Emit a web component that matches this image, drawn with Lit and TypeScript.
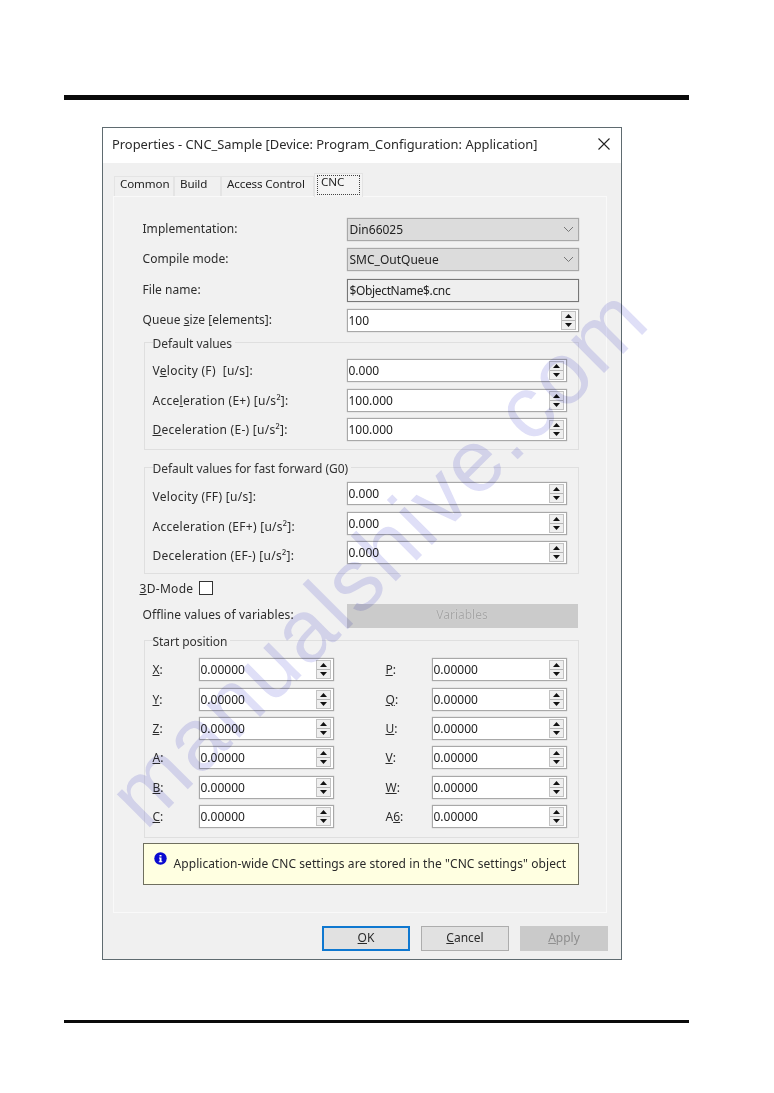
import { LitElement, html, css } from "lit";
import { customElement } from "lit/decorators.js";

const mn = (s: string) => {
  const i = s.indexOf("&");
  if (i < 0) return s;
  return html`${s.slice(0, i)}<u>${s[i + 1]}</u>${s.slice(i + 2)}`;
};

const spin = html`<span class="spin">
  <span class="sb"><svg width="7" height="4" viewBox="0 0 7 4"><path d="M3.5 0 7 4H0z" fill="#111"/></svg></span>
  <span class="sb"><svg width="7" height="4" viewBox="0 0 7 4"><path d="M0 0h7L3.5 4z" fill="#111"/></svg></span>
</span>`;

const chevron = html`<svg class="chev" width="11" height="7" viewBox="0 0 11 7"><path d="M1 1l4.5 4.5L10 1" fill="none" stroke="#777" stroke-width="1"/></svg>`;

const TABS: [string, number][] = [["Common", 60], ["Build", 47], ["Access Control", 93]];

@customElement("app-root")
export class AppRoot extends LitElement {
  static styles = css`
    :host { display: block; height: 1093px; position: relative; overflow: hidden; background: #fff;
      font-family: "Noto Sans", "Open Sans", sans-serif; font-size: 12px; color: #222; }
    .rule { background: #0a0a0a; margin-left: 64px; width: 625px; }
    .rule.top { height: 5px; margin-top: 95px; }
    .rule.bot { height: 3px; margin-top: 60px; }
    .dialog { margin: 27px 0 0 102px; width: 520px; height: 833px; box-sizing: border-box;
      border: 1px solid #5f6b70; background: #f0f0f0; display: flex; flex-direction: column; filter: blur(0.35px); }
    .title { height: 35px; box-sizing: border-box; background: #fff; flex: none; display: flex; align-items: center;
      justify-content: space-between; padding: 0 11px 3px 9px; font-size: 12.9px; color: #2a2a2a; }
    .tabs { display: flex; align-items: flex-end; height: 33px; margin-left: 11px; flex: none; }
    .tab { height: 20px; box-sizing: border-box; padding: 0 0 0 5px; line-height: 13px; background: #f0f0f0;
      border: 1px solid #e4e4e4; border-bottom: 0; font-size: 11.6px; letter-spacing: -0.12px; color: #222; }
    .tab.active { width: 49px; height: 24px; background: #f4f4f4; border-color: #e4e4e4; padding: 1px 2px 2px; margin-bottom: -1px;
      position: relative; z-index: 1; }
    .focus { display: block; height: 100%; box-sizing: border-box; border: 1px dotted #444; padding-left: 3px; line-height: 12px; }
    .panel { margin-left: 10px; width: 494px; height: 717px; box-sizing: border-box; border: 1.5px solid #f9f9f9;
      background: #f1f1f1; padding: 20.5px 0 0 28.5px; flex: none; }
    .top-rows { display: flex; flex-direction: column; gap: 7.67px; }
    .row { display: flex; align-items: center; height: 23px; }
    .lbl { color: #2c2c2c; white-space: pre; }
    .top-rows .lbl { width: 204px; letter-spacing: 0.05px; margin-top: -2px; }
    .field { box-sizing: border-box; height: 23px; border: 1px solid #a8a8a8; background: #fff; display: flex;
      align-items: center; padding-left: 2px; font-size: 12px; color: #222; box-shadow: 0 0 1px #aaa; }
    .w232 { width: 232px; }
    .select { background: #dcdcdc; justify-content: space-between; padding-right: 4px; }
    .readonly { background: #efefef; border-color: #777; letter-spacing: -0.35px; }
    .num { flex: 1; margin-left: -1px; }
    .spin { width: 15px; height: 19px; margin-right: 2px; box-sizing: border-box; display: flex; flex-direction: column;
      border: 1px solid #c2c2c2; flex: none; }
    .sb { flex: 1; display: flex; align-items: center; justify-content: center; background: #efefef; }
    .sb + .sb { border-top: 1px solid #b5b5b5; }
    .sb svg { display: block; }
    fieldset { margin: 0; min-width: 0; border: 1px solid #dfdfdf; width: 435px; box-sizing: border-box;
      margin-left: 1px; padding: 0 0 0 8px; }
    legend { padding: 0 3px 0 0; margin-left: 0; line-height: 19px; height: 16px; letter-spacing: -0.05px; color: #333; }
    .g1 { margin-top: 2px; padding-top: 9px; padding-bottom: 8px; }
    .g2 { margin-top: 9px; padding-top: 7px; padding-bottom: 9px; }
    .g3 { margin-top: 4px; padding-top: 10px; padding-bottom: 9px; }
    .stack { display: flex; flex-direction: column; gap: 6.5px; }
    .stack .lbl { width: 194px; letter-spacing: 0.27px; }
    .g2 .stack .lbl { margin-top: 6px; }
    .stack .field { width: 220px; }
    .check { display: flex; align-items: center; height: 14px; margin: 7px 0 0 -3px; }
    .check .lbl { width: 59px; letter-spacing: 0.3px; }
    .box { width: 14px; height: 14px; box-sizing: border-box; border: 1px solid #333; background: #fff; }
    .offline { margin-top: 9px; height: 24px; }
    .offline .lbl { width: 204px; letter-spacing: 0.1px; margin-top: -4px; }
    .vars { width: 231px; height: 24px; background: #cbcbcb; color: #a6a6a6; display: flex; align-items: center;
      justify-content: center; text-shadow: 0 0 1px #eee; padding-bottom: 3px; box-sizing: border-box; }
    .grid { display: grid; grid-template-columns: 46px 135px 52px 46px 135px; row-gap: 6.3px; align-items: center; }
    .grid .field { width: 135px; }
    .info { box-sizing: border-box; margin-top: 5px; width: 436px; height: 42px; border: 1px solid #6f6f5f; background: #ffffe1;
      display: flex; align-items: flex-start; padding: 8px 0 0 10px; letter-spacing: 0.07px; color: #2a2a2a; }
    .info svg { flex: none; margin: 0 7px 0 0; }
    .info span { margin-top: 3px; white-space: nowrap; }
    .btns { display: flex; justify-content: flex-end; gap: 11px; padding: 13px 13px 0 0; }
    .btn { width: 88px; height: 25px; box-sizing: border-box; border: 1px solid #adadad; background: #e1e1e1; display: flex;
      align-items: center; justify-content: center; color: #2a2a2a; padding-bottom: 2px; }
    .btn.ok { border: 2px solid #0f78d0; }
    .btn.off { background: #cacaca; border-color: #cacaca; color: #8e8e8e; }
    .wm { position: absolute; left: 0; top: 0; width: 774px; height: 1093px; pointer-events: none; mix-blend-mode: multiply;
      opacity: 0.17; filter: blur(0.5px); }
    .wm text { font: 400 88px "Liberation Sans", Arial, sans-serif; letter-spacing: 2.2px; fill: #3c3ccc; }
  `;

  private stack(rows: [string, string][]) {
    return html`<div class="stack">${rows.map(([l, v]) => html`
      <div class="row"><span class="lbl">${mn(l)}</span>
        <div class="field"><span class="num">${v}</span>${spin}</div></div>`)}</div>`;
  }

  render() {
    const pos: [string, string][] = [["&X:", "&P:"], ["&Y:", "&Q:"], ["&Z:", "&U:"], ["&A:", "&V:"], ["&B:", "&W:"], ["&C:", "A&6:"]];
    const cell = html`<div class="field"><span class="num">0.00000</span>${spin}</div>`;
    return html`
      <div class="rule top"></div>
      <div class="dialog">
        <div class="title">
          <span>Properties - CNC_Sample [Device: Program_Configuration: Application]</span>
          <svg width="12" height="12" viewBox="0 0 12 12"><path d="M.5.5l11 11M11.5.5l-11 11" stroke="#222" stroke-width="1.1" fill="none"/></svg>
        </div>
        <div class="tabs">
          ${TABS.map(([t, w]) => html`<div class="tab" style="width:${w}px">${t}</div>`)}
          <div class="tab active"><span class="focus">CNC</span></div>
        </div>
        <div class="panel">
          <div class="top-rows">
            <div class="row"><span class="lbl">Implementation:</span><div class="field w232 select"><span>Din66025</span>${chevron}</div></div>
            <div class="row"><span class="lbl">Compile mode:</span><div class="field w232 select"><span>SMC_OutQueue</span>${chevron}</div></div>
            <div class="row"><span class="lbl">File name:</span><div class="field w232 readonly">$ObjectName$.cnc</div></div>
            <div class="row"><span class="lbl">Queue <u>s</u>ize [elements]:</span><div class="field w232"><span class="num">100</span>${spin}</div></div>
          </div>
          <fieldset class="g1"><legend>Default values</legend>
            ${this.stack([["V&elocity (F)  [u/s]:", "0.000"], ["Acce&leration (E+) [u/s²]:", "100.000"], ["&Deceleration (E-) [u/s²]:", "100.000"]])}
          </fieldset>
          <fieldset class="g2"><legend>Default values for fast forward (G0)</legend>
            ${this.stack([["Velocity (FF) [u/s]:", "0.000"], ["Acceleration (EF+) [u/s²]:", "0.000"], ["Deceleration (EF-) [u/s²]:", "0.000"]])}
          </fieldset>
          <div class="check"><span class="lbl"><u>3</u>D-Mode</span><div class="box"></div></div>
          <div class="row offline"><span class="lbl">Offline values of variables:</span><div class="vars">Variables</div></div>
          <fieldset class="g3"><legend>Start position</legend>
            <div class="grid">
              ${pos.map(([a, b]) => html`
                <span class="lbl">${mn(a)}</span>${cell}<span></span><span class="lbl">${mn(b)}</span>${cell}`)}
            </div>
          </fieldset>
          <div class="info">
            <svg width="13" height="13" viewBox="0 0 13 13"><circle cx="6.5" cy="6.5" r="6.2" fill="#0a0ad0"/><path d="M5.5 3h2v1.6h-2zM5 5.6h2.5v3.6h.8v1H4.8v-1h.8V6.6H5z" fill="#fff"/></svg>
            <span>Application-wide CNC settings are stored in the "CNC settings" object</span>
          </div>
        </div>
        <div class="btns">
          <div class="btn ok"><span><u>O</u>K</span></div>
          <div class="btn"><span><u>C</u>ancel</span></div>
          <div class="btn off"><span><u>A</u>pply</span></div>
        </div>
      </div>
      <div class="rule bot"></div>
      <svg class="wm" viewBox="0 0 774 1093"><text transform="translate(145.5 831.5) rotate(-45)">manualshive.com</text></svg>
    `;
  }
}
